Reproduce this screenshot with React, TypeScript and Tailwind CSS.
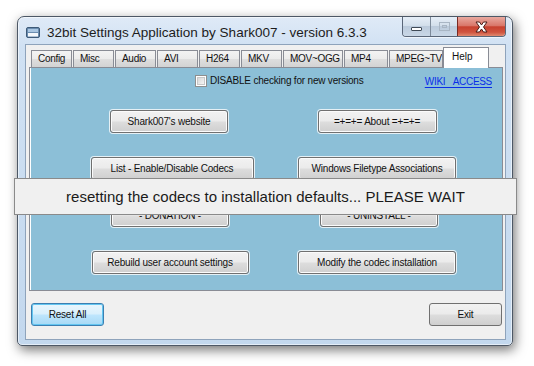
import React from "react";

const F = "font-['Liberation_Sans',Arial,sans-serif]";

function Btn({
  w,
  children,
  className = "",
}: {
  w: string;
  children: React.ReactNode;
  className?: string;
}) {
  return (
    <div
      className={`${w} h-[23px] flex items-center justify-center rounded-[3px] border border-[#707070] bg-[linear-gradient(#f2f2f2_0%,#ebebeb_48%,#dddddd_52%,#cfcfcf_100%)] shadow-[0_0_0_1px_rgba(245,248,250,0.85),inset_0_0_0_1px_#fbfbfb] text-[10px] tracking-[-0.2px] text-[#111] leading-none whitespace-nowrap ${F} ${className}`}
    >
      {children}
    </div>
  );
}

const tabs: { label: string; w: string }[] = [
  { label: "Config", w: "w-[41px]" },
  { label: "Misc", w: "w-[41px]" },
  { label: "Audio", w: "w-[41px]" },
  { label: "AVI", w: "w-[41px]" },
  { label: "H264", w: "w-[41px]" },
  { label: "MKV", w: "w-[41px]" },
  { label: "MOV~OGG", w: "w-[60px]" },
  { label: "MP4", w: "w-[44px]" },
  { label: "MPEG~TV", w: "w-[54px]" },
];

export default function App() {
  return (
    <div className={`relative w-[534px] h-[366px] bg-white pl-[17px] pt-[16px] ${F}`}>
      {/* window */}
      <div className="w-[496px] h-[330px] flex flex-col rounded-t-[7px] rounded-b-[5px] border border-[#4d5866] bg-[linear-gradient(180deg,#dfeaf7_0%,#d0e1f3_30px,#c3d8ee_100%)] shadow-[2px_4px_12px_rgba(0,0,0,0.55),inset_0_0_0_1px_rgba(255,255,255,0.55)]">
        {/* title bar */}
        <div className="h-[27px] flex items-start relative">
          <svg className="ml-[8px] mt-[10px] shrink-0" width="14" height="11" viewBox="0 0 14 11">
            <rect x="0.5" y="0.5" width="13" height="10" rx="1.5" fill="#6b8db0" stroke="#3e5a78" />
            <rect x="2" y="2" width="10" height="3" fill="#a9c6e2" />
            <rect x="2" y="6" width="10" height="3.5" fill="#f4f8fc" />
          </svg>
          <div className="ml-[7px] mt-[7px] text-[13.5px] leading-[17px] text-[#1c1c1c] whitespace-nowrap">
            32bit Settings Application by Shark007 - version 6.3.3
          </div>
          {/* caption buttons */}
          <div className="shrink-0 ml-auto mr-[6px] flex h-[20px] rounded-b-[4px] border border-t-0 border-[#5a6678] overflow-hidden shadow-[0_1px_0_rgba(255,255,255,0.6)]">
            <div className="w-[28px] h-full flex items-center justify-center border-r border-[#7d8a9a] bg-[linear-gradient(#e6eef7_0%,#d3dfeb_45%,#bccbdc_50%,#c9d7e6_100%)]">
              <div className="w-[11px] h-[4px] mt-[4px] rounded-[1px] border border-[#404a56] bg-white" />
            </div>
            <div className="w-[27px] h-full flex items-center justify-center border-r border-[#7a2a22] bg-[linear-gradient(#e6eef7_0%,#d3dfeb_45%,#bccbdc_50%,#c9d7e6_100%)]">
              <div className="w-[11px] h-[9px] border border-[#a9b6c4] flex items-center justify-center">
                <div className="w-[5px] h-[3px] border border-[#a9b6c4]" />
              </div>
            </div>
            <div className="w-[47px] h-full flex items-center justify-center bg-[linear-gradient(#e9a99f_0%,#d9776a_45%,#c7412f_52%,#d0543f_80%,#e08a70_100%)]">
              <svg width="15" height="12" viewBox="0 0 15 12">
                <path
                  d="M2 1 L5.5 1 L7.5 4 L9.5 1 L13 1 L9.5 6 L13 11 L9.5 11 L7.5 8 L5.5 11 L2 11 L5.5 6 Z"
                  fill="#ffffff"
                  stroke="#4a1f1a"
                  strokeWidth="1"
                  strokeLinejoin="round"
                />
              </svg>
            </div>
          </div>
        </div>

        {/* client area */}
        <div className="flex-1 ml-[7px] mr-[6px] mb-[5px] border border-[#8ea3bb] bg-[#f0f0f0] flex flex-col">
          {/* tab control */}
          <div className="ml-[3px] mr-[2px] mt-[2px] flex flex-col">
            <div className="flex items-end pl-[2px] h-[20px] relative z-10">
              {tabs.map((t, i) => (
                <div
                  key={t.label}
                  className={`${t.w} ${i > 0 ? "ml-[1px]" : ""} h-[17px] flex items-center pl-[6px] border border-b-0 border-[#898c95] bg-[linear-gradient(#f3f3f3_0%,#ebebeb_50%,#dedede_51%,#d3d3d3_100%)] text-[10px] tracking-[-0.3px] text-[#111] leading-none whitespace-nowrap overflow-hidden`}
                >
                  {t.label}
                </div>
              ))}
              <div className="w-[46px] h-[21px] -mb-[1px] flex items-center pl-[8px] pb-[2px] border border-b-0 border-[#898c95] bg-white text-[10px] text-[#111] leading-none">
                Help
              </div>
            </div>
            {/* panel */}
            <div className="h-[224px] border border-[#898c95] bg-white pl-[1px]">
              <div className="h-full bg-[#8cbfd7] flex flex-col">
                <div className="flex items-center mt-[7px] h-[12px]">
                  <div className="ml-[164px] w-[12px] h-[12px] border border-[#8e8f8f] bg-white p-[1px]">
                    <div className="w-full h-full border border-[#c8c8c8] bg-[linear-gradient(135deg,#d8d8d8,#f4f4f4)]" />
                  </div>
                  <span className="ml-[3px] text-[10px] tracking-[-0.2px] text-[#111] leading-none whitespace-nowrap">
                    DISABLE checking for new versions
                  </span>
                  <span className="ml-auto mr-[10px] mt-[2px] text-[10px] tracking-[-0.3px] leading-none text-[#0a2ee8] underline underline-offset-2 whitespace-pre">
                    {"WIKI\u00a0\u00a0\u00a0ACCESS"}
                  </span>
                </div>
                <div className="mt-[23px] ml-[54px] grid grid-cols-[170px_170px] gap-x-[37px] gap-y-[24px] justify-items-center">
                  <Btn w="w-[118px]" className="translate-x-[-1px]">Shark007's website</Btn>
                  <Btn w="w-[119px]">=+=+= About =+=+=</Btn>
                  <Btn w="w-[163px]" className="translate-x-[2px]">List - Enable/Disable Codecs</Btn>
                  <Btn w="w-[158px]">Windows Filetype Associations</Btn>
                  <Btn w="w-[118px]">- DONATION -</Btn>
                  <Btn w="w-[118px]" className="translate-x-[2px]">- UNINSTALL -</Btn>
                  <Btn w="w-[157px]">Rebuild user account settings</Btn>
                  <Btn w="w-[158px]">Modify the codec installation</Btn>
                </div>
              </div>
            </div>
          </div>
          {/* bottom buttons */}
          <div className="flex items-center mt-[12px] ml-[5px] mr-[3px]">
            <div className="w-[73px] h-[23px] flex items-center justify-center rounded-[3px] border border-[#3c7fb1] bg-[linear-gradient(#eaf6fd_0%,#d9f0fc_48%,#bee6fd_52%,#a7d9f5_100%)] shadow-[inset_0_0_0_1px_#63c6f1] text-[10px] tracking-[-0.2px] text-[#111] leading-none">
              Reset All
            </div>
            <div className="ml-auto">
              <Btn w="w-[73px]" className="shadow-none">Exit</Btn>
            </div>
          </div>
        </div>
      </div>

      {/* overlay message */}
      <div className="absolute left-[14px] top-[178px] w-[503px] h-[37px] border border-[#8a8a8a] bg-[#f0f0f0] flex items-center justify-center text-[15px] text-[#1a1a1a] leading-none whitespace-nowrap">
        resetting the codecs to installation defaults... PLEASE WAIT
      </div>
    </div>
  );
}
